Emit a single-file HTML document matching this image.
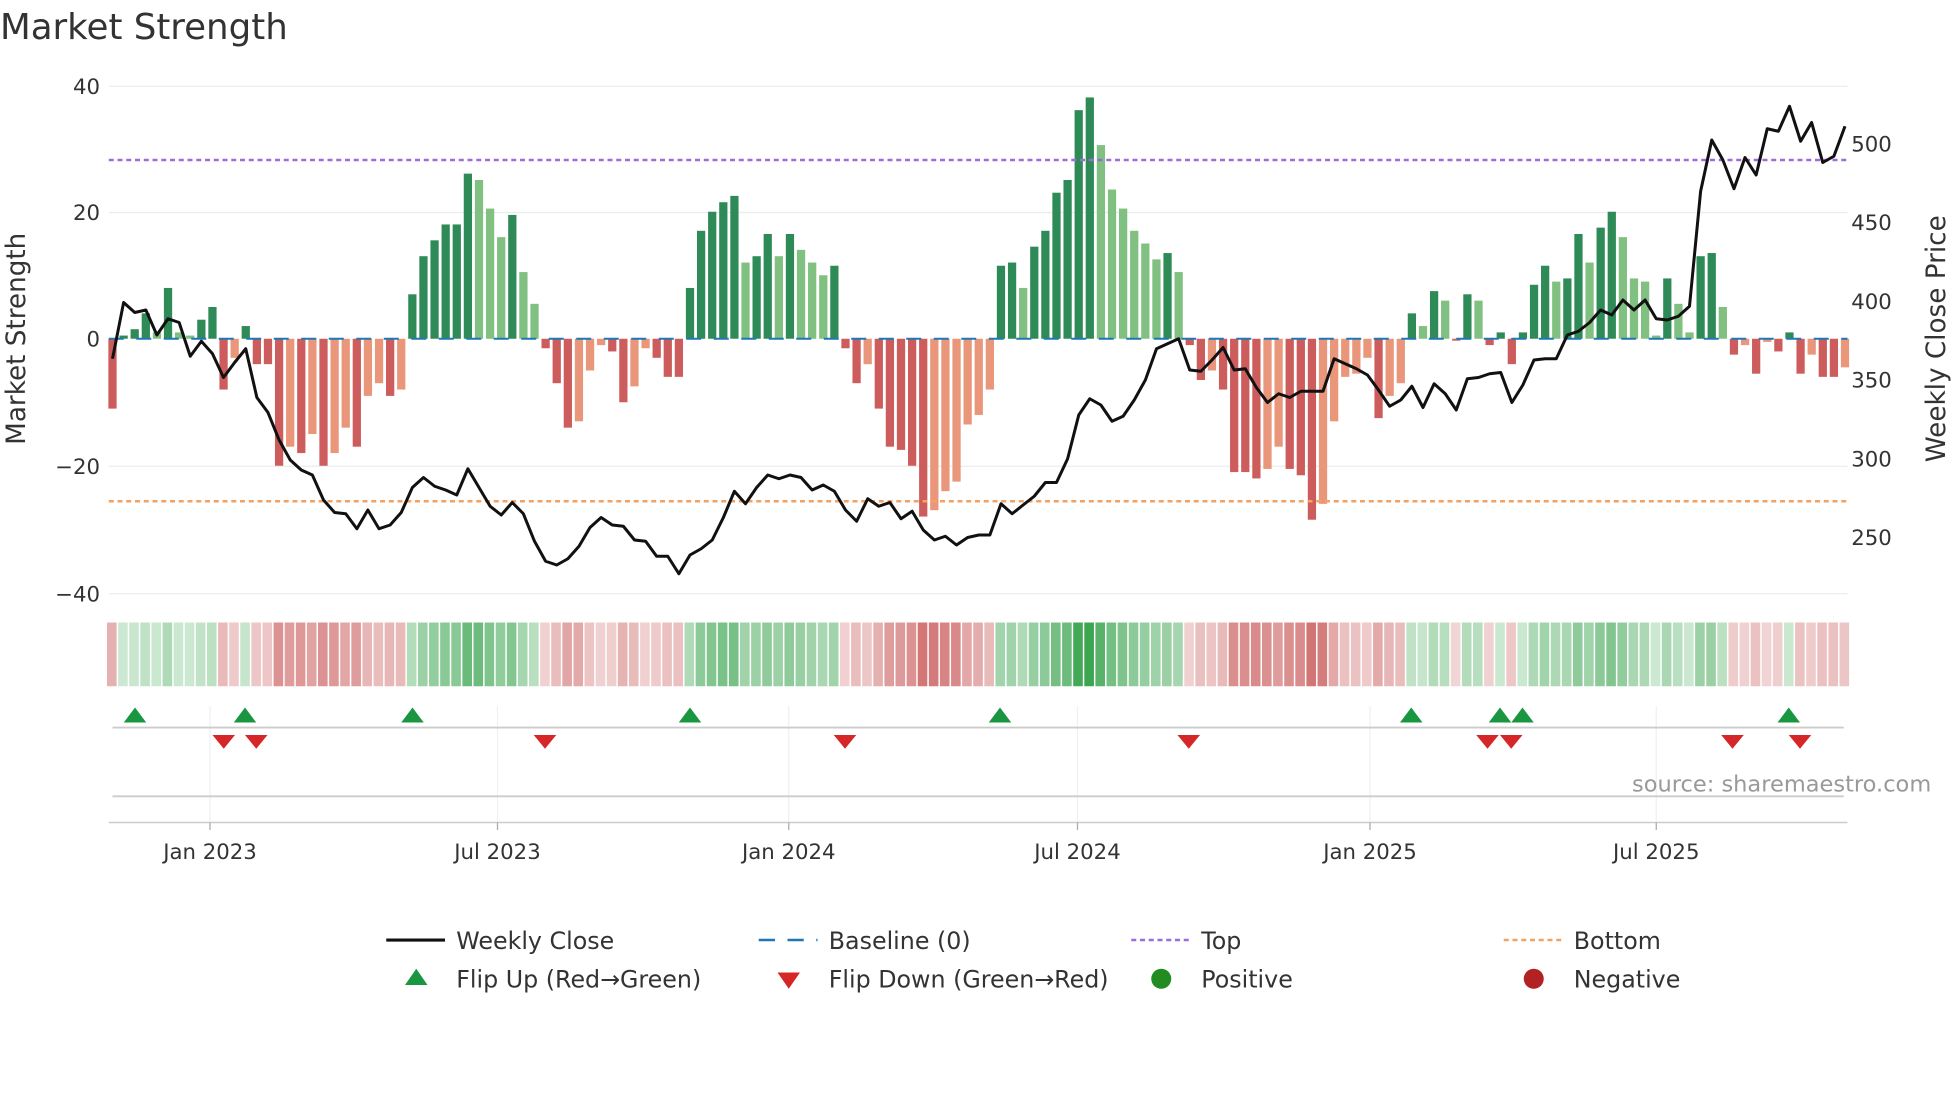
<!DOCTYPE html>
<html><head><meta charset="utf-8"><style>
html,body{margin:0;padding:0;background:#fff;}
svg{display:block;font-family:"DejaVu Sans","Liberation Sans",sans-serif;}
</style></head><body>
<svg id="s" width="1960" height="1102" viewBox="0 0 1568 881.6" xmlns="http://www.w3.org/2000/svg">
<rect width="1568" height="882" fill="#fff"/>
<text x="0" y="31" font-size="28.5" fill="#333">Market Strength</text>
<g stroke="#ececec" stroke-width="1">
<line x1="87" y1="69" x2="1478" y2="69"/><line x1="87" y1="170" x2="1478" y2="170"/>
<line x1="87" y1="373" x2="1478" y2="373"/><line x1="87" y1="475" x2="1478" y2="475"/>
</g>
<g font-size="17" fill="#333" text-anchor="end">
<text x="80" y="75">40</text><text x="80" y="176">20</text><text x="80" y="277">0</text>
<text x="80" y="379">−20</text><text x="80" y="481">−40</text>
</g>
<g font-size="17" fill="#333">
<text x="1481" y="121">500</text><text x="1481" y="184">450</text><text x="1481" y="247">400</text>
<text x="1481" y="310">350</text><text x="1481" y="373">300</text><text x="1481" y="436">250</text>
</g>
<text transform="translate(20,271) rotate(-90)" font-size="21" fill="#333" text-anchor="middle">Market Strength</text>
<text transform="translate(1556,271) rotate(-90)" font-size="21" fill="#333" text-anchor="middle">Weekly Close Price</text>
<g id="bars"></g>
<line x1="87" y1="271" x2="1478" y2="271" stroke="#1f77b4" stroke-width="1.6" stroke-dasharray="12,10"/>
<line x1="87" y1="128" x2="1478" y2="128" stroke="#9b6bdf" stroke-width="2" stroke-dasharray="4,3"/>
<line x1="87" y1="401" x2="1478" y2="401" stroke="#f4a261" stroke-width="2" stroke-dasharray="4,3"/>
<polyline id="price" fill="none" stroke="#111" stroke-width="2.4" stroke-linejoin="round"/>
<g id="strip"></g>
<g stroke="#eef0f2" stroke-width="1">
<line x1="168" y1="565" x2="168" y2="658"/><line x1="398" y1="565" x2="398" y2="658"/>
<line x1="631" y1="565" x2="631" y2="658"/><line x1="862" y1="565" x2="862" y2="658"/>
<line x1="1096" y1="565" x2="1096" y2="658"/><line x1="1325" y1="565" x2="1325" y2="658"/>
</g>
<line x1="90" y1="582" x2="1475" y2="582" stroke="#ccc" stroke-width="1.5"/>
<line x1="90" y1="637" x2="1475" y2="637" stroke="#ccc" stroke-width="1.5"/>
<line x1="87" y1="658" x2="1478" y2="658" stroke="#ccc" stroke-width="1.2"/>
<g stroke="#aaa" stroke-width="1">
<line x1="168" y1="658" x2="168" y2="664"/><line x1="398" y1="658" x2="398" y2="664"/>
<line x1="631" y1="658" x2="631" y2="664"/><line x1="862" y1="658" x2="862" y2="664"/>
<line x1="1096" y1="658" x2="1096" y2="664"/><line x1="1325" y1="658" x2="1325" y2="664"/>
</g>
<g id="marks"></g>
<g font-size="17" fill="#333" text-anchor="middle">
<text x="168" y="687">Jan 2023</text><text x="398" y="687">Jul 2023</text>
<text x="631" y="687">Jan 2024</text><text x="862" y="687">Jul 2024</text>
<text x="1096" y="687">Jan 2025</text><text x="1325" y="687">Jul 2025</text>
</g>
<text x="1545" y="633" font-size="18" fill="#999" text-anchor="end">source: sharemaestro.com</text>
<g font-size="19" fill="#333">
<line x1="309" y1="752" x2="356" y2="752" stroke="#111" stroke-width="2.5"/>
<text x="365" y="759">Weekly Close</text>
<line x1="607" y1="752" x2="654" y2="752" stroke="#1f77b4" stroke-width="2" stroke-dasharray="13,10"/>
<text x="663" y="759">Baseline (0)</text>
<line x1="905" y1="752" x2="952" y2="752" stroke="#9b6bdf" stroke-width="2" stroke-dasharray="4,3"/>
<text x="961" y="759">Top</text>
<line x1="1203" y1="752" x2="1250" y2="752" stroke="#f4a261" stroke-width="2" stroke-dasharray="4,3"/>
<text x="1259" y="759">Bottom</text>
<polygon points="333,775 342,788 324,788" fill="#1a9641"/>
<text x="365" y="790">Flip Up (Red→Green)</text>
<polygon points="622,778 640,778 631,791" fill="#d62728"/>
<text x="663" y="790">Flip Down (Green→Red)</text>
<circle cx="929" cy="783" r="8" fill="#228b22"/>
<text x="961" y="790">Positive</text>
<circle cx="1227" cy="783" r="8" fill="#b22222"/>
<text x="1259" y="790">Negative</text>
</g>
</svg>
<script>
var v=[-11,0.5,1.5,4,1,8,1,0.5,3,5,-8,-3,2,-4,-4,-20,-17,-18,-15,-20,-18,-14,-17,-9,-7,-9,-8,7,13,15.5,18,18,26,25,20.5,16,19.5,10.5,5.5,-1.5,-7,-14,-13,-5,-1,-2,-10,-7.5,-1.5,-3,-6,-6,8,17,20,21.5,22.5,12,13,16.5,13,16.5,14,12,10,11.5,-1.5,-7,-4,-11,-17,-17.5,-20,-28,-27,-24,-22.5,-13.5,-12,-8,11.5,12,8,14.5,17,23,25,36,38,30.5,23.5,20.5,17,15,12.5,13.5,10.5,-1,-6.5,-5,-8,-21,-21,-22,-20.5,-17,-20.5,-21.5,-28.5,-26,-13,-6,-5.5,-3,-12.5,-9,-7,4,2,7.5,6,-0.3,7,6,-1,1,-4,1,8.5,11.5,9,9.5,16.5,12,17.5,20,16,9.5,9,0.5,9.5,5.5,1,13,13.5,5,-2.5,-1,-5.5,-0.5,-2,1,-5.5,-2.5,-6,-6,-4.5];
var step=(1476-90)/(v.length-1),ns="http://www.w3.org/2000/svg";
function el(p,t,a){var e=document.createElementNS(ns,t);for(var k in a)e.setAttribute(k,a[k]);p.appendChild(e);return e;}
var B=document.getElementById('bars'),S=document.getElementById('strip'),M=document.getElementById('marks');
for(var i=0;i<v.length;i++){var x=90+i*step,y0=271,h=v[i]*5.08,p=i>0?v[i-1]:0,c;
 if(v[i]>=0)c=(v[i]>=p)?'#2e8b57':'#80c080';else c=(v[i]<=p)?'#cd5c5c':'#e9967a';
 el(B,'rect',{x:x-3.3,y:h>=0?y0-h:y0,width:6.6,height:Math.max(Math.abs(h),0.8),fill:c});
 var a=Math.min(1,0.25+Math.abs(v[i])/38*0.75),sc=v[i]>=0?'rgba(60,165,80,'+a+')':'rgba(200,85,85,'+a+')';
 el(S,'rect',{x:x-4.4,y:498,width:step-1.2,height:51,fill:sc});}
var pr=[287,242,250,248,268,255,258,285,273,283,302,290,279,318,330,352,368,376,380,400,410,411,423,408,423,420,410,390,382,389,392,396,375,390,405,412,402,411,433,449,452,447,437,422,414,420,421,432,433,445,445,459,444,439,432,414,393,403,390,380,383,380,382,392,388,393,408,417,399,405,402,415,409,424,432,429,436,430,428,428,403,411,404,397,386,386,367,332,319,324,337,333,320,304,279,275,271,296,297,288,278,296,295,310,322,315,318,313,313,313,287,291,295,300,312,325,320,309,326,307,315,328,303,302,299,298,322,308,288,287,287,268,265,258,248,252,240,248,240,255,256,253,245,153,112,128,151,126,140,103,105,85,113,98,130,125,101];
var pts=[];for(var j=0;j<pr.length;j++)pts.push((90+j*(1476-90)/(pr.length-1)).toFixed(1)+','+pr[j]);
document.getElementById('price').setAttribute('points',pts.join(' '));
[108,196,330,552,800,1129,1200,1218,1431].forEach(function(x){el(M,'polygon',{points:x+',566 '+(x+9)+',578 '+(x-9)+',578',fill:'#1a9641'});});
[179,205,436,676,951,1190,1209,1386,1440].forEach(function(x){el(M,'polygon',{points:(x-9)+',588 '+(x+9)+',588 '+x+',599',fill:'#d62728'});});
</script>
</body></html>
